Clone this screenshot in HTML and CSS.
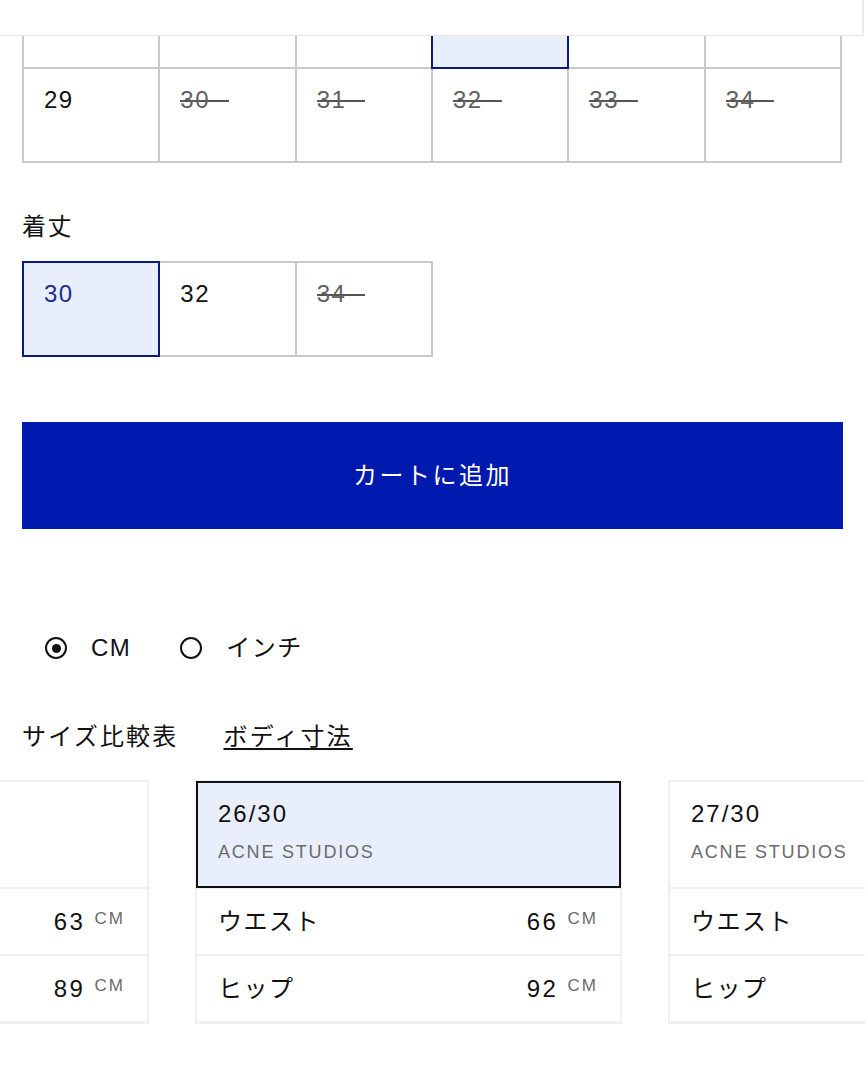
FILE: index.html
```html
<!DOCTYPE html>
<html lang="ja">
<head>
<meta charset="utf-8">
<title>サイズ選択</title>
<link rel="stylesheet" href="styles.css">
</head>
<body>
<div class="topbar"></div>
<main class="content">
  <div class="grid grid-6 first">
    <div class="cell"></div>
    <div class="cell"></div>
    <div class="cell"></div>
    <div class="cell selected"></div>
    <div class="cell"></div>
    <div class="cell"></div>
    <div class="cell"><span class="num">29</span></div>
    <div class="cell"><span class="num off">30</span></div>
    <div class="cell"><span class="num off">31</span></div>
    <div class="cell"><span class="num off">32</span></div>
    <div class="cell"><span class="num off">33</span></div>
    <div class="cell"><span class="num off">34</span></div>
  </div>

  <div class="label">着丈</div>
  <div class="grid grid-3">
    <div class="cell selected"><span class="num">30</span></div>
    <div class="cell"><span class="num">32</span></div>
    <div class="cell"><span class="num off">34</span></div>
  </div>

  <button class="cart">カートに追加</button>

  <div class="units">
    <label class="radio"><span class="dot checked"></span><span>CM</span></label>
    <label class="radio"><span class="dot"></span><span>インチ</span></label>
  </div>

  <div class="tabs">
    <span class="tab">サイズ比較表</span>
    <span class="tab active">ボディ寸法</span>
  </div>
</main>

<section class="cards">
  <div class="track">
    <div class="card">
      <div class="card-head">
        <div class="size">25/30</div>
        <div class="brand">ACNE STUDIOS</div>
      </div>
      <div class="row"><span>ウエスト</span><span class="val">63 <sup>CM</sup></span></div>
      <div class="row"><span>ヒップ</span><span class="val">89 <sup>CM</sup></span></div>
    </div>
    <div class="card current">
      <div class="card-head">
        <div class="size">26/30</div>
        <div class="brand">ACNE STUDIOS</div>
      </div>
      <div class="row"><span>ウエスト</span><span class="val">66 <sup>CM</sup></span></div>
      <div class="row"><span>ヒップ</span><span class="val">92 <sup>CM</sup></span></div>
    </div>
    <div class="card">
      <div class="card-head">
        <div class="size">27/30</div>
        <div class="brand">ACNE STUDIOS</div>
      </div>
      <div class="row"><span>ウエスト</span><span class="val">69 <sup>CM</sup></span></div>
      <div class="row"><span>ヒップ</span><span class="val">95 <sup>CM</sup></span></div>
    </div>
  </div>
</section>
</body>
</html>
```

FILE: styles.css
```css
* { box-sizing: border-box; }
html, body { margin: 0; padding: 0; background: #fff; }
body {
  width: 865px;
  height: 1080px;
  overflow: hidden;
  font-family: "Liberation Sans", "Noto Sans CJK JP", sans-serif;
  font-size: 24px;
  line-height: 28px;
  letter-spacing: 1.5px;
  color: #111;
}

.topbar {
  position: relative;
  z-index: 2;
  height: 36px;
  width: 864px;
  background: #fff;
  border-bottom: 1px solid #e6e6e6;
  border-right: 2px solid #ececec;
}

.content {
  padding: 0 22px;
}

.grid {
  display: grid;
  gap: 2px;
  padding: 2px;
  background: #c9c9c9;
  grid-auto-rows: 92px;
}
.grid-6 { grid-template-columns: repeat(6, 1fr); width: 820px; }
.grid-3 { grid-template-columns: repeat(3, 1fr); width: 411px; }
.grid.first { margin-top: -63px; }

.cell {
  background: #fff;
  padding: 17px 20px 0;
}
.cell.selected {
  background: #e8eefb;
  outline: 2px solid #0c1a7c;
  position: relative;
  z-index: 1;
}
.cell.selected .num { color: #1a2d8f; }

.num { display: inline-block; }
.num.off {
  color: #606060;
  padding-right: 19px;
  background: linear-gradient(#555, #555) no-repeat 0 14px / 100% 2px;
}

.label {
  margin-top: 50px;
  margin-bottom: 20px;
}

.cart {
  display: block;
  width: 821px;
  height: 107px;
  margin-top: 65px;
  border: 0;
  background: #0019ae;
  color: #fff;
  font: inherit;
  letter-spacing: 2.5px;
  line-height: 28px;
}

.units {
  display: flex;
  gap: 49px;
  margin-top: 105px;
  padding-left: 23px;
}
.radio {
  display: flex;
  align-items: center;
  gap: 24px;
}
.dot {
  width: 22px;
  height: 22px;
  border: 2.5px solid #111;
  border-radius: 50%;
  display: flex;
  align-items: center;
  justify-content: center;
}
.dot.checked::after {
  content: "";
  width: 9px;
  height: 9px;
  border-radius: 50%;
  background: #111;
}

.tabs {
  display: flex;
  gap: 45px;
  margin-top: 61px;
  letter-spacing: 2.2px;
}
.tab.active {
  text-decoration: underline;
  text-decoration-thickness: 2px;
  text-underline-offset: 3px;
}

.cards {
  overflow: hidden;
  margin-top: 29px;
  width: 865px;
}
.track {
  display: flex;
  gap: 46px;
  margin-left: -278px;
}
.card {
  flex: 0 0 427px;
  border: 2px solid #f0f0f0;
  border-bottom-width: 3px;
  background: #fff;
}
.card-head {
  height: 105px;
  padding: 18px 21px 0;
}
.card.current .card-head {
  background: #e8eefb;
  outline: 2px solid #111;
  outline-offset: -1px;
  position: relative;
}
.size { line-height: 28px; letter-spacing: 2px; }
.brand {
  margin-top: 13px;
  font-size: 18px;
  line-height: 22px;
  color: #6b6b6b;
  letter-spacing: 1.8px;
}
.row {
  height: 67px;
  border-top: 2px solid #f0f0f0;
  display: flex;
  align-items: center;
  justify-content: space-between;
  padding: 0 22px 0 21px;
}
.val { white-space: nowrap; letter-spacing: 2.5px; }
.val sup {
  font-size: 17px;
  color: #6b6b6b;
  letter-spacing: 2px;
  vertical-align: 6px;
  line-height: 0;
}
```
